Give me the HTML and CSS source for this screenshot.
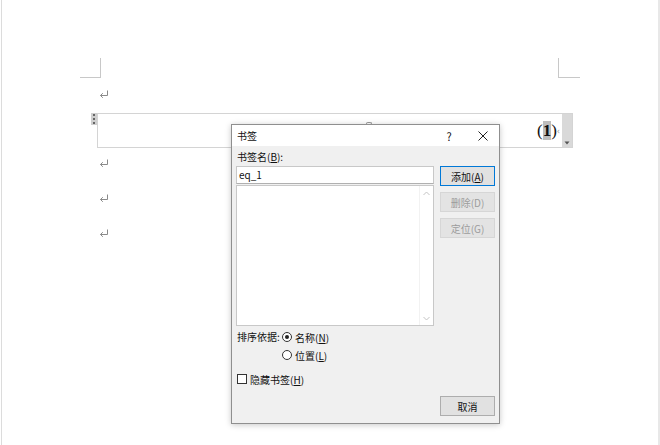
FILE: index.html
```html
<!DOCTYPE html>
<html lang="zh-CN">
<head>
<meta charset="utf-8">
<title>书签</title>
<link rel="stylesheet" href="styles.css">
</head>
<body>
<div class="page">
  <div class="marks">
    <div class="mark mark-left"></div>
    <div class="mark mark-right"></div>
  </div>
  <div class="doc">
    <div class="para p1"><svg class="ret" width="10" height="9" viewBox="0 0 10 9"><path d="M8.5 0.5V5.5H1.5M3.8 3.2L1.5 5.5L3.8 7.8" fill="none" stroke="#8a8a8a" stroke-width="1"/></svg></div>
    <div class="eq">
      <span class="handle"><i></i><i></i><i></i></span>
      <span class="tick"></span>
      <div class="eq-main"></div>
      <div class="eq-num">(<span class="hl">1</span>)<span class="lt">‹</span></div>
      <div class="eq-bar"><svg width="6" height="4" viewBox="0 0 6 4"><path d="M0.5 0.5H5.5L3 3.5Z" fill="#555"/></svg></div>
    </div>
    <div class="para p2"><svg class="ret" width="10" height="9" viewBox="0 0 10 9"><path d="M8.5 0.5V5.5H1.5M3.8 3.2L1.5 5.5L3.8 7.8" fill="none" stroke="#8a8a8a" stroke-width="1"/></svg></div>
    <div class="para"><svg class="ret" width="10" height="9" viewBox="0 0 10 9"><path d="M8.5 0.5V5.5H1.5M3.8 3.2L1.5 5.5L3.8 7.8" fill="none" stroke="#8a8a8a" stroke-width="1"/></svg></div>
    <div class="para"><svg class="ret" width="10" height="9" viewBox="0 0 10 9"><path d="M8.5 0.5V5.5H1.5M3.8 3.2L1.5 5.5L3.8 7.8" fill="none" stroke="#8a8a8a" stroke-width="1"/></svg></div>
  </div>

  <div class="dialog">
    <div class="titlebar">
      <span class="title">书签</span>
      <span class="help">?</span>
      <span class="close"><svg width="10" height="10" viewBox="0 0 10 10"><path d="M0.5 0.5L9.5 9.5M9.5 0.5L0.5 9.5" stroke="#222" stroke-width="1" fill="none"/></svg></span>
    </div>
    <div class="dbody">
      <div class="label">书签名(<u>B</u>):</div>
      <div class="main-row">
        <div class="left-col">
          <div class="input">eq_1</div>
          <div class="list">
            <div class="track">
              <svg width="7" height="5" viewBox="0 0 7 5"><path d="M0.5 4L3.5 1L6.5 4" fill="none" stroke="#c4c4c4" stroke-width="1"/></svg>
              <svg width="7" height="5" viewBox="0 0 7 5"><path d="M0.5 1L3.5 4L6.5 1" fill="none" stroke="#c4c4c4" stroke-width="1"/></svg>
            </div>
          </div>
        </div>
        <div class="right-col">
          <div class="btn btn-default">添加(<u>A</u>)</div>
          <div class="btn btn-disabled">删除(D)</div>
          <div class="btn btn-disabled">定位(G)</div>
        </div>
      </div>
      <div class="sort-row">
        <span class="sort-label">排序依据:</span>
        <div class="radios">
          <div class="radio-line"><span class="radio on"></span>名称(<u>N</u>)</div>
          <div class="radio-line"><span class="radio"></span>位置(<u>L</u>)</div>
        </div>
      </div>
      <div class="check-line"><span class="check"></span>隐藏书签(<u>H</u>)</div>
      <div class="bottom-row"><div class="btn">取消</div></div>
    </div>
  </div>
</div>
</body>
</html>
```

FILE: styles.css
```css
html, body {
  margin: 0;
  padding: 0;
  background: #fff;
}
body {
  width: 660px;
  height: 445px;
  overflow: hidden;
  font-family: "Noto Sans CJK SC", "Noto Sans", sans-serif;
}
.page {
  position: relative;
  box-sizing: border-box;
  width: 659px;
  height: 445px;
  margin-left: 1px;
  border-left: 1px solid #dcdcdc;
  border-right: 2px solid #e8e8e8;
  background: #fff;
}
.marks {
  display: flex;
  justify-content: space-between;
  padding: 58px 78px 0 78px;
}
.mark {
  height: 19px;
  border-bottom: 1px solid #c8c8c8;
}
.mark-left {
  width: 20px;
  border-right: 1px solid #c8c8c8;
}
.mark-right {
  width: 21px;
  border-left: 1px solid #c8c8c8;
}
.doc {
  padding-left: 95px;
  width: 475px;
}
.para {
  height: 35px;
  display: flex;
  align-items: center;
  padding-left: 2px;
}
.p1 {
  height: 32px;
  margin-bottom: 3px;
}
.p2 {
  margin-top: -2px;
}
.ret {
  display: block;
}
.eq {
  position: relative;
  box-sizing: border-box;
  width: 476px;
  height: 35px;
  border: 1px solid #d4d4d4;
  display: flex;
}
.handle {
  position: absolute;
  left: -7px;
  top: -1px;
  width: 6px;
  height: 12px;
  background: #cfcfcf;
  display: flex;
  flex-direction: column;
  align-items: center;
  justify-content: center;
  gap: 2px;
}
.handle i {
  display: block;
  width: 2px;
  height: 2px;
  background: #666;
}
.tick {
  position: absolute;
  left: 268px;
  top: 8px;
  width: 4px;
  height: 3px;
  border: 1px solid #999;
  border-bottom: none;
  border-radius: 2px 2px 0 0;
}
.eq-main {
  flex: 1;
}
.eq-num {
  font-family: "Liberation Serif", serif;
  font-size: 17px;
  line-height: 33px;
  color: #111;
  padding-right: 2px;
}
.hl {
  background: #bdbdbd;
  font-weight: bold;
}
.lt {
  font-family: "DejaVu Sans", sans-serif;
  font-size: 8px;
  color: #999;
  vertical-align: 2px;
}
.eq-bar {
  width: 10px;
  background: #d9d9d9;
  display: flex;
  align-items: flex-end;
  justify-content: center;
  padding-bottom: 2px;
  box-sizing: border-box;
}
.eq-bar svg {
  display: block;
}

/* dialog */
.dialog {
  position: absolute;
  left: 229px;
  top: 124px;
  box-sizing: border-box;
  width: 269px;
  height: 300px;
  border: 1px solid #8f8f8f;
  background: #f0f0f0;
  box-shadow: 0 1px 6px rgba(0, 0, 0, 0.22);
  font-size: 10px;
  color: #111;
  white-space: nowrap;
}
.titlebar {
  height: 21px;
  background: #fff;
  display: flex;
  align-items: center;
  padding-left: 5px;
}
.title {
  flex: 1;
  font-size: 10px;
}
.help {
  width: 12px;
  text-align: center;
  font-size: 11px;
  margin-right: 23px;
}
.close {
  width: 10px;
  display: flex;
  margin-right: 11px;
}
.close svg {
  display: block;
}
.dbody {
  padding: 3px 4px 0 4px;
}
.label {
  line-height: 16px;
  padding-left: 1px;
}
u {
  text-decoration: underline;
  text-underline-offset: 1px;
}
.main-row {
  display: flex;
  gap: 6px;
  margin-top: 1px;
}
.left-col {
  width: 199px;
}
.input {
  box-sizing: border-box;
  height: 18px;
  background: #fff;
  border: 1px solid #c8c8c8;
  border-bottom-color: #b0b0b0;
  line-height: 16px;
  padding-left: 2px;
}
.list {
  box-sizing: border-box;
  height: 141px;
  margin-top: 1px;
  background: #fff;
  border: 1px solid #c8c8c8;
  display: flex;
  justify-content: flex-end;
}
.track {
  width: 13px;
  border-left: 1px solid #f2f2f2;
  display: flex;
  flex-direction: column;
  justify-content: space-between;
  align-items: center;
  padding: 5px 0 4px;
}
.track svg {
  display: block;
}
.right-col {
  width: 55px;
  display: flex;
  flex-direction: column;
  gap: 6px;
}
.btn {
  box-sizing: border-box;
  width: 55px;
  height: 20px;
  background: #e1e1e1;
  border: 1px solid #adadad;
  display: flex;
  align-items: center;
  justify-content: center;
  font-size: 10px;
}
.btn-default {
  border-color: #0078d7;
  box-shadow: inset 0 0 0 1px #e1e1e1;
}
.btn-disabled {
  background: #e3e3e3;
  border-color: #d6d6d6;
  color: #9c9c9c;
}
.sort-row {
  display: flex;
  margin-top: 2px;
}
.sort-label {
  line-height: 18px;
  padding-left: 1px;
  width: 45px;
}
.radio-line {
  display: flex;
  align-items: center;
  height: 18px;
}
.radio {
  box-sizing: border-box;
  width: 10px;
  height: 10px;
  border: 1px solid #333;
  border-radius: 50%;
  background: #fff;
  margin-right: 3px;
  position: relative;
}
.radio.on::after {
  content: "";
  position: absolute;
  left: 2px;
  top: 2px;
  width: 4px;
  height: 4px;
  border-radius: 50%;
  background: #222;
}
.check-line {
  display: flex;
  align-items: center;
  height: 18px;
  margin-top: 6px;
  padding-left: 1px;
}
.check {
  box-sizing: border-box;
  width: 10px;
  height: 10px;
  border: 1px solid #333;
  background: #fff;
  margin-right: 3px;
}
.bottom-row {
  display: flex;
  justify-content: flex-end;
  margin-top: 8px;
  padding-right: 0;
}
```
